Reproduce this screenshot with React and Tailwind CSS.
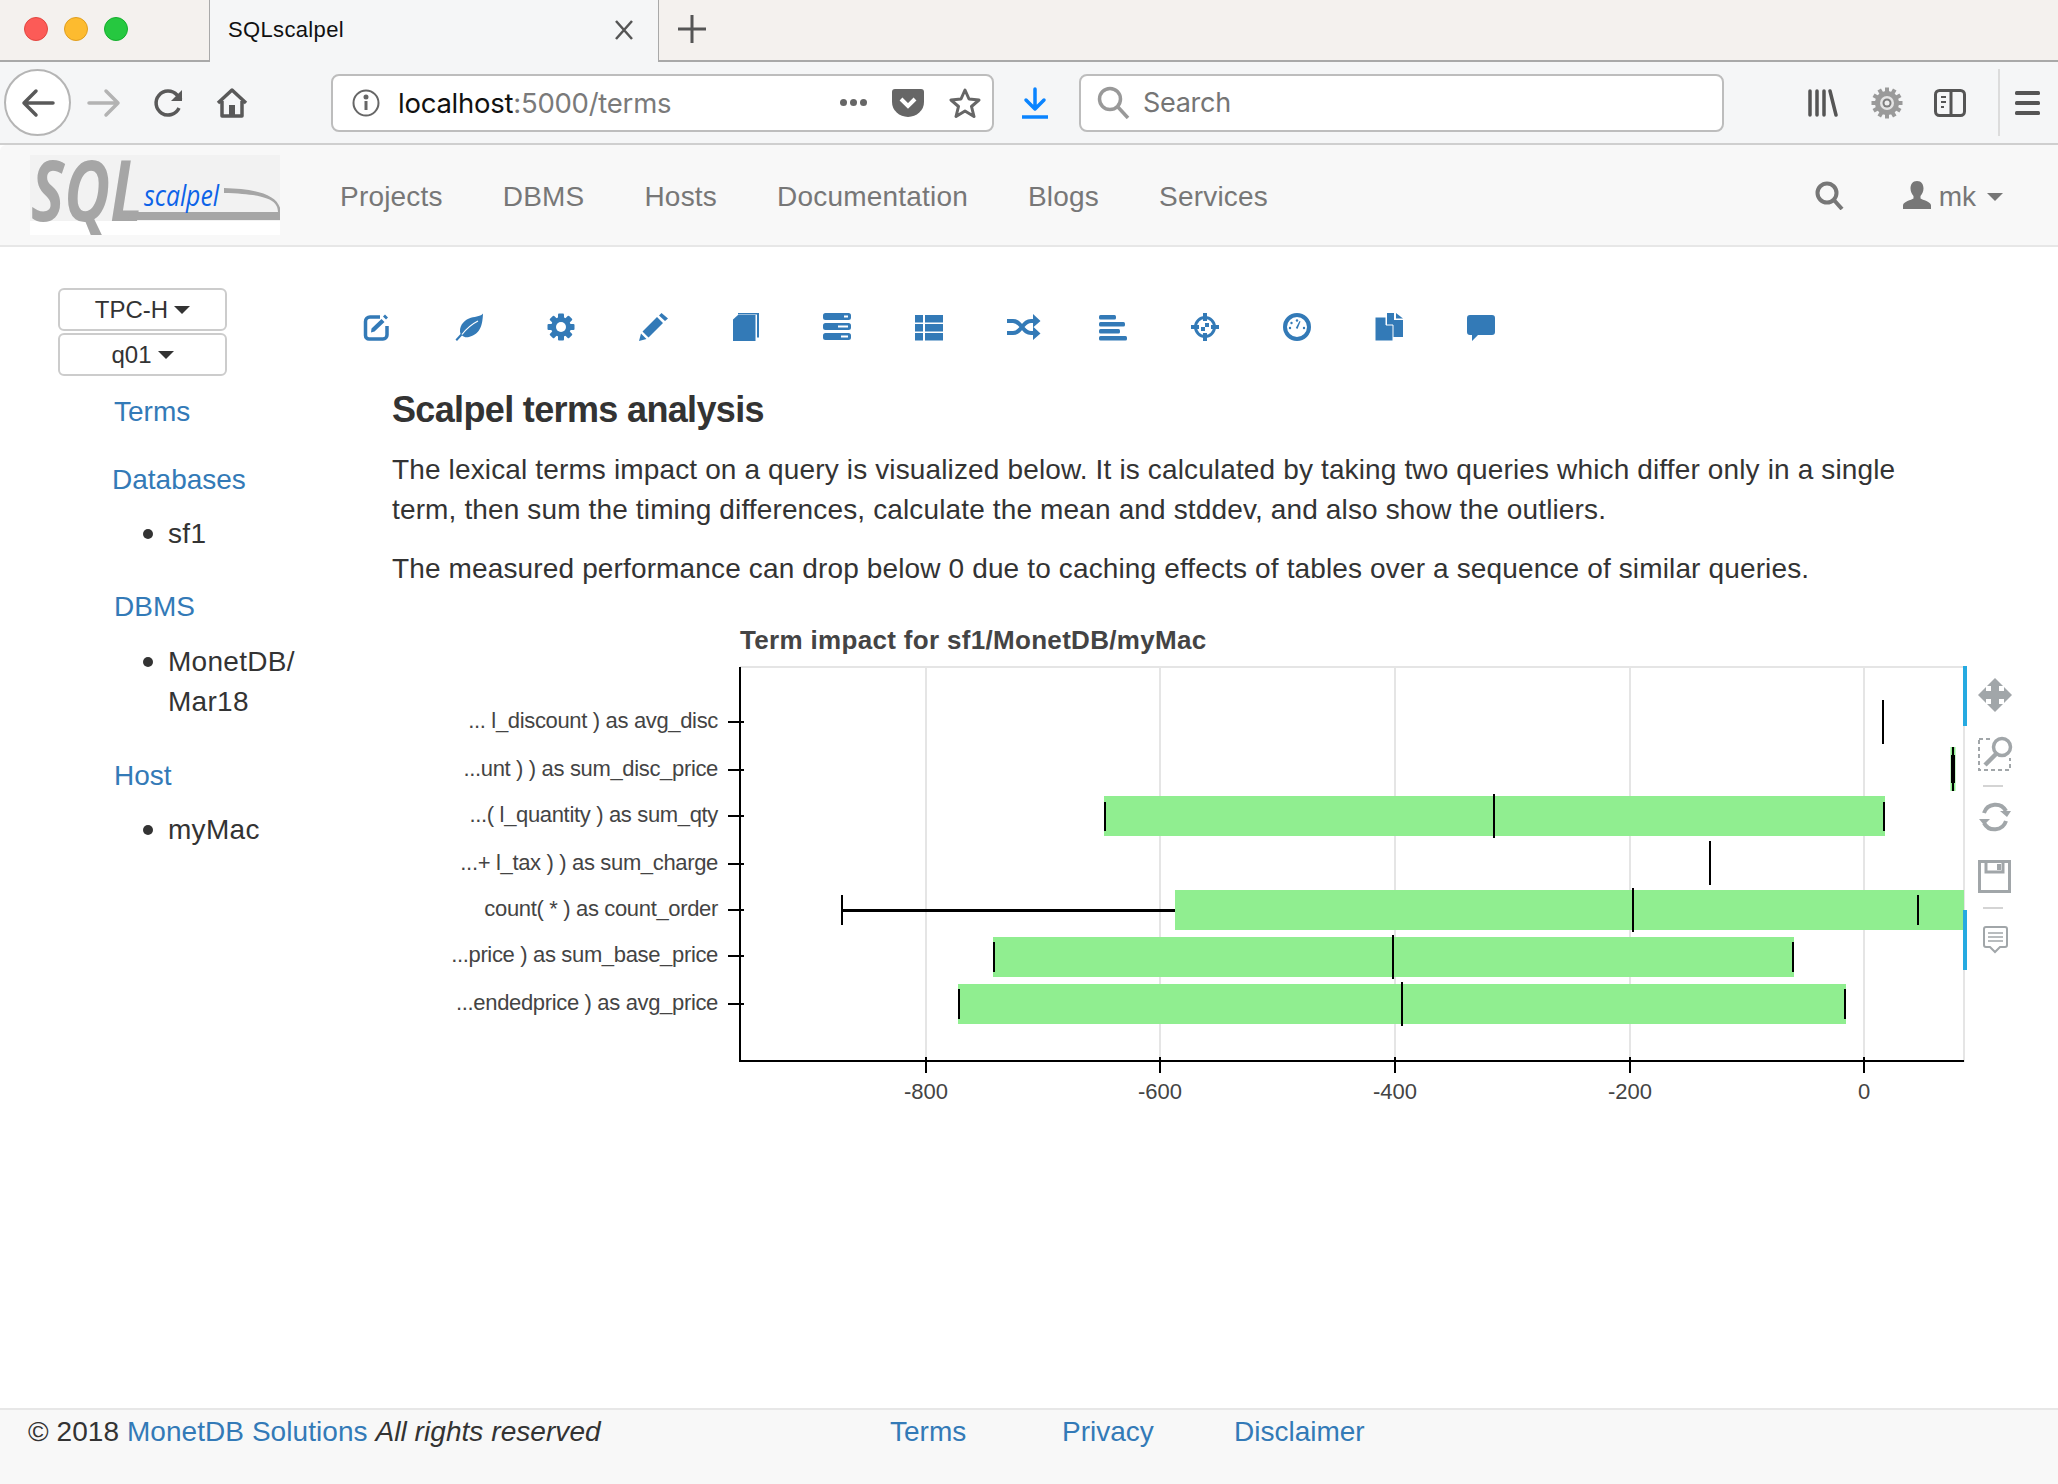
import { Fragment } from 'react';

const BLUE = '#337ab7';
const AXIS_TICKS = [
  { x: 926, label: '-800' },
  { x: 1160, label: '-600' },
  { x: 1395, label: '-400' },
  { x: 1630, label: '-200' },
  { x: 1864, label: '0' },
];

const ROWS = [
  { y: 723, label: '... l_discount ) as avg_disc' },
  { y: 771, label: '...unt ) ) as sum_disc_price' },
  { y: 817, label: '...( l_quantity ) as sum_qty' },
  { y: 865, label: '...+ l_tax ) ) as sum_charge' },
  { y: 911, label: 'count( * ) as count_order' },
  { y: 957, label: '...price ) as sum_base_price' },
  { y: 1005, label: '...endedprice ) as avg_price' },
];

// x0, x1, top, bottom of the boxes
const BOXES = [
  [1104, 1885, 797, 837],
  [1175, 1964, 891, 931],
  [993, 1794, 938, 978],
  [958, 1846, 985, 1025],
];

// x, y0, y1 of the black marks
const MARKS = [
  [1883, 701, 745],
  [1494, 795, 839],
  [1105, 803, 832],
  [1884, 803, 832],
  [1710, 842, 886],
  [1633, 889, 933],
  [1918, 896, 926],
  [842, 896, 926],
  [1393, 936, 980],
  [994, 943, 973],
  [1793, 943, 973],
  [1402, 983, 1027],
  [959, 990, 1020],
  [1845, 990, 1020],
];

function Caret({ color = '#333', className = '' }) {
  return <span className={`inline-block w-0 h-0 border-x-[8px] border-x-transparent border-t-[8px] ${className}`} style={{ borderTopColor: color }} />;
}

function Glyph({ w = 28, children }) {
  return (
    <svg width={w} height="28" viewBox={`0 0 ${w} 28`} fill={BLUE} className="block">
      {children}
    </svg>
  );
}

function Bullet({ children }) {
  return (
    <li className="flex ml-[143px] gap-[15px] tracking-[0.3px]">
      <span className="w-[10px] h-[10px] rounded-full bg-[#333] mt-[15px] shrink-0" />
      <span>{children}</span>
    </li>
  );
}

const TOOL_ICONS = [
  <Glyph key="edit">
    <path d="M17 4H7a4.500 4.500 0 0 0-4.500 4.500v14A3.500 3.500 0 0 0 6 26h14a4 4 0 0 0 4-4v-9" fill="none" stroke={BLUE} strokeWidth="3.500" />
    <path d="M8.500 15.500 18.500 6l3 3-10 9.500-3.500 1zM20 3.500l2-2 3 3-2 2z" />
  </Glyph>,
  <Glyph key="leaf">
    <path d="M28 0.500C27.500 11 26 21 14 24c-3 .6-5 .2-7-1.500L2 28l-1.500-1.500L5.500 21C3.500 14 8 8 14 5.500 19 3.500 25 4 28 .5z" />
    <path d="M7 21.500C12 15 17 11 23 8" fill="none" stroke="#fff" strokeWidth="1.200" />
  </Glyph>,
  <Glyph key="cog">
    <g transform="translate(14 14)">
      {[0, 45, 90, 135].map((a) => (
        <rect key={a} x="-3" y="-13.500" width="6" height="27" rx="1" transform={`rotate(${a})`} />
      ))}
      <circle r="10" />
      <circle r="5" fill="#fff" />
    </g>
  </Glyph>,
  <Glyph key="pencil" w={29}>
    <path d="M0 28l2-7.500 5.500 5.500zM3.500 18.500 18 4l6 6L9.500 24.500zM20 2.500 22.500 0 29 5.500 26 8z" />
  </Glyph>,
  <Glyph key="book">
    <g transform="translate(2 0)">
      <path d="M0 6.500 5 2h17.500v26H0z" />
      <path d="M5 0h21v24.500h-2V1.500H5z" />
    </g>
  </Glyph>,
  <Glyph key="tasks">
    <path fillRule="evenodd" d="M2.500 0h23A2.500 2.500 0 0 1 28 2.500v2A2.500 2.500 0 0 1 25.500 7h-23A2.500 2.500 0 0 1 0 4.500v-2A2.500 2.500 0 0 1 2.500 0zM21 2.500v2h4v-2zM2.500 10h23a2.500 2.500 0 0 1 2.500 2.500v2a2.500 2.500 0 0 1-2.500 2.500h-23A2.500 2.500 0 0 1 0 14.500v-2A2.500 2.500 0 0 1 2.500 10zM15 12.500v2h10v-2zM2.500 20h23a2.500 2.500 0 0 1 2.500 2.500v2a2.500 2.500 0 0 1-2.500 2.500h-23A2.500 2.500 0 0 1 0 24.500v-2A2.500 2.500 0 0 1 2.500 20zM18 22.500v2h7v-2z" />
  </Glyph>,
  <Glyph key="list">
    <path d="M0 2h8v7.500H0zM10 2h18v7.500H10zM0 11h8v7.500H0zM10 11h18v7.500H10zM0 20h8v7.500H0zM10 20h18v7.500H10z" />
  </Glyph>,
  <Glyph key="random" w={34}>
    <path d="M0 8h6c4.500 0 6 2.500 9 6s4.500 6 9 6h3M0 20h6c4.500 0 6-2.500 9-6s4.500-6 9-6h3" fill="none" stroke={BLUE} strokeWidth="4" />
    <path d="M26 1l7.500 7-7.500 6.500zM26 13.500l7.500 7L26 27z" />
  </Glyph>,
  <Glyph key="align">
    <rect x="0" y="2" width="17" height="4.500" rx="1.500" />
    <rect x="0" y="9" width="26" height="4.500" rx="1.500" />
    <rect x="0" y="16" width="21" height="4.500" rx="1.500" />
    <rect x="0" y="23" width="28" height="4.500" rx="1.500" />
  </Glyph>,
  <Glyph key="target">
    <circle cx="14" cy="14" r="9.500" fill="none" stroke={BLUE} strokeWidth="3" />
    <path d="M12 0h4v8h-4zM12 20h4v8h-4zM0 12h8v4H0zM20 12h8v4h-8z" />
    <path d="M14 10h4v4h-4zM10 14h4v4h-4z" />
  </Glyph>,
  <Glyph key="gauge">
    <circle cx="14" cy="14" r="12" fill="none" stroke={BLUE} strokeWidth="4" />
    <path d="M12.800 15 16.500 8l1 .5-3 7.500z" />
    <circle cx="14" cy="7.500" r="1.200" />
    <circle cx="8.500" cy="10" r="1.200" />
    <circle cx="7" cy="15" r="1.200" />
    <circle cx="21" cy="15" r="1.200" />
  </Glyph>,
  <Glyph key="copy">
    <path d="M12 0h7v7h9v17H12z" />
    <path d="M21 0l7 5.500h-7z" />
    <path d="M0 4h11v8h7v16H0z" stroke="#fff" strokeWidth="1" />
    <path d="M13 4.500l5 5.500h-5z" />
  </Glyph>,
  <Glyph key="comment">
    <path d="M3 2h22a3 3 0 0 1 3 3v14a3 3 0 0 1-3 3H11l-6 6v-6H3a3 3 0 0 1-3-3V5a3 3 0 0 1 3-3z" />
  </Glyph>,
];

function Logo() {
  return (
    <svg width="250" height="80" viewBox="0 0 250 80" className="block">
      <rect width="250" height="66" fill="#f2f2f2" />
      <rect width="250" height="14" y="66" fill="#fff" />
      <text x="1" y="66" fontFamily="'Open Sans', sans-serif" fontStyle="italic" fontWeight="700" fontSize="84" fill="#a6a6a6" textLength="112" lengthAdjust="spacingAndGlyphs">SQL</text>
      <path d="M100 57h148c0-12-12-18-54-19v-5c36 1 62 8 56 32H98z" fill="#a6a6a6" />
      <text x="114" y="51" fontFamily="'Open Sans', sans-serif" fontStyle="italic" fontSize="30" fill="#0d63e8" textLength="75" lengthAdjust="spacingAndGlyphs">scalpel</text>
    </svg>
  );
}

function Chart() {
  return (
    <svg width="1618" height="480" viewBox="440 620 1618 480" className="block ml-[77px] mt-[30px]" fontFamily="'Liberation Sans', Arial, sans-serif">
      <text x="740" y="650" fontSize="26" fontWeight="700" fill="#444" className="tracking-[0.32px]">Term impact for sf1/MonetDB/myMac</text>
      <rect x="740" y="667" width="1224" height="2" fill="#e5e5e5" />
      <rect x="1963" y="667" width="2" height="396" fill="#e5e5e5" />
      {AXIS_TICKS.map((t) => (
        <rect key={t.label} x={t.x - 1} y="668" width="2" height="394" fill="#e5e5e5" />
      ))}
      {BOXES.map(([x0, x1, y0, y1]) => (
        <rect key={x0} x={x0} y={y0} width={x1 - x0} height={y1 - y0} fill="#90ee90" />
      ))}
      <rect x="842" y="910" width="333" height="3" fill="#000" />
      <rect x="1950.500" y="748" width="5" height="44" fill="#90ee90" />
      <rect x="1952" y="748" width="2" height="44" fill="#000" />
      <rect x="1951" y="756" width="4" height="28" fill="#000" />
      {MARKS.map(([x, y0, y1]) => (
        <rect key={`${x}-${y0}`} x={x - 1} y={y0} width="2" height={y1 - y0} fill="#000" />
      ))}
      <rect x="739" y="668" width="2" height="395" fill="#000" />
      <rect x="739" y="1061" width="1225" height="2" fill="#000" />
      {ROWS.map((r) => (
        <Fragment key={r.y}>
          <rect x="728" y={r.y - 1} width="16" height="2" fill="#000" />
          <text x="718" y={r.y + 6} textAnchor="end" fontSize="22" fill="#444" className="tracking-[-0.34px]">{r.label}</text>
        </Fragment>
      ))}
      {AXIS_TICKS.map((t) => (
        <Fragment key={t.label}>
          <rect x={t.x - 1} y="1058" width="2" height="16" fill="#000" />
          <text x={t.x} y="1100" textAnchor="middle" fontSize="22" fill="#444">{t.label}</text>
        </Fragment>
      ))}
      {/* plot toolbar */}
      <rect x="1963" y="667" width="4" height="60" fill="#26aae1" />
      <rect x="1963" y="911" width="4" height="60" fill="#26aae1" />
      <path d="M1995 679L2003 687H1999V692H2004V688L2012 696L2004 704V700H1999V705H2003L1995 713L1987 705H1991V700H1986V704L1978 696L1986 688V692H1991V687H1987Z" fill="#a1a6a9" />
      <rect x="1979" y="740" width="31" height="31" fill="none" stroke="#a1a6a9" strokeWidth="2" strokeDasharray="4 3" />
      <rect x="1990" y="735" width="24" height="24" fill="#fff" />
      <circle cx="2002" cy="748" r="8.500" fill="none" stroke="#a1a6a9" strokeWidth="3.500" />
      <path d="M1996 755l-11 11" stroke="#a1a6a9" strokeWidth="4.500" />
      <rect x="1983" y="786" width="20" height="2" fill="#d4d4d4" />
      <path d="M1984 814a12 12 0 0 1 22-2M2006 822a12 12 0 0 1-22 2" fill="none" stroke="#a1a6a9" strokeWidth="4" />
      <path d="M2000 812h11l-4 6zM1979 820h11l-6 6z" fill="#a1a6a9" />
      <path d="M1979.500 862.500h30v30h-30zM1986 862v11h17v-11" fill="none" stroke="#a1a6a9" strokeWidth="3" />
      <rect x="1997" y="865" width="4" height="6" fill="#a1a6a9" />
      <rect x="1983" y="908" width="20" height="2" fill="#d4d4d4" />
      <path d="M1986 928h19a2 2 0 0 1 2 2v16a2 2 0 0 1-2 2h-5l-5 5-5-5h-4a2 2 0 0 1-2-2v-16a2 2 0 0 1 2-2z" fill="none" stroke="#a1a6a9" strokeWidth="2" />
      <path d="M1988 934h15M1988 938h15M1988 942h15" stroke="#a1a6a9" strokeWidth="1.500" />
    </svg>
  );
}

function BrowserChrome() {
  return (
    <>
      <div className="h-[62px] flex bg-[#f4f1ee] border-b-2 border-[#a9a9a9] relative shrink-0">
        <div className="w-[209px] flex items-center gap-[16px] pl-[24px] pb-[3px]">
          <span className="w-[24px] h-[24px] rounded-full bg-[#fc5b57] border border-[#e2463f]" />
          <span className="w-[24px] h-[24px] rounded-full bg-[#fdbb2f] border border-[#e09e1e]" />
          <span className="w-[24px] h-[24px] rounded-full bg-[#26c840] border border-[#14ae2c]" />
        </div>
        <div className="w-[450px] h-[62px] bg-[#f5f6f7] border-x border-[#a9a9a9] flex items-center justify-between pl-[18px] pr-[24px] pb-[3px]">
          <span className="text-[22px] text-[#111] tracking-[0.35px]">SQLscalpel</span>
          <svg width="20" height="20" viewBox="0 0 20 20" stroke="#555" strokeWidth="2.500" fill="none">
            <path d="M2 1l16 18M18 1 2 19" />
          </svg>
        </div>
        <svg width="30" height="30" viewBox="0 0 30 30" className="ml-[18px] mt-[14px]" stroke="#555" strokeWidth="3">
          <path d="M15 1v28M1 15h28" />
        </svg>
      </div>

      <div className="h-[83px] flex items-center bg-[#f5f6f7] border-b-2 border-[#cfcfcf] relative shrink-0">
        <div className="w-[67px] h-[67px] ml-[4px] rounded-full bg-white border-2 border-[#b5b5b5] flex items-center justify-center shrink-0">
          <svg width="34" height="30" viewBox="0 0 34 30" fill="none" stroke="#595959" strokeWidth="3.500" strokeLinecap="round" strokeLinejoin="round">
            <path d="M32 15H3M15 3 3 15l12 12" />
          </svg>
        </div>
        <svg width="34" height="30" viewBox="0 0 34 30" fill="none" stroke="#b3b3b3" strokeWidth="3.500" strokeLinecap="round" strokeLinejoin="round" className="ml-[16px] shrink-0">
          <path d="M2 15h29M19 3l12 12-12 12" />
        </svg>
        <svg width="32" height="32" viewBox="0 0 32 32" fill="none" stroke="#595959" strokeWidth="3.500" className="ml-[31px] shrink-0">
          <path d="M27 21a12 12 0 1 1-2-13l4 5" />
          <path d="M30 3v11H19" fill="#595959" stroke="none" />
        </svg>
        <svg width="32" height="32" viewBox="0 0 32 32" fill="none" stroke="#595959" strokeWidth="3.500" strokeLinejoin="round" className="ml-[32px] shrink-0">
          <path d="M2 16 16 3l14 13M6 14v15h20V14" />
          <rect x="13" y="18" width="6" height="11" fill="#595959" stroke="none" />
        </svg>

        <div className="w-[663px] h-[58px] ml-[83px] rounded-[8px] bg-white border-2 border-[#bdbdbd] flex items-center pl-[19px] pr-[11px] shrink-0">
          <svg width="28" height="28" viewBox="0 0 28 28" fill="none" stroke="#666" strokeWidth="2">
            <circle cx="14" cy="14" r="12.500" />
            <path d="M14 12v9" strokeWidth="3" />
            <circle cx="14" cy="8" r="1.500" fill="#666" />
          </svg>
          <span className="ml-[18px] text-[27.500px] font-['Inter',sans-serif] tracking-[-0.25px] text-[#111]">localhost<span className="text-[#7a7a7a]">:5000/terms</span></span>
          <span className="ml-auto text-[#666] flex gap-[3px]">
            <span className="w-[7px] h-[7px] rounded-full bg-[#666]" />
            <span className="w-[7px] h-[7px] rounded-full bg-[#666]" />
            <span className="w-[7px] h-[7px] rounded-full bg-[#666]" />
          </span>
          <svg width="32" height="30" viewBox="0 0 32 30" className="ml-[25px]">
            <path d="M3 1h26a3 3 0 0 1 3 3v10a16 15 0 0 1-32 0V4a3 3 0 0 1 3-3z" fill="#666" />
            <path d="M9 11l7 7 7-7" fill="none" stroke="#fff" strokeWidth="4" />
          </svg>
          <svg width="32" height="32" viewBox="0 0 32 32" fill="none" stroke="#666" strokeWidth="3" strokeLinejoin="round" className="ml-[25px]">
            <path d="M16 3l4 9 10 1-7.500 6.500 2.500 10-9-5.500-9 5.500 2.500-10L2 13l10-1z" />
          </svg>
        </div>

        <svg width="28" height="32" viewBox="0 0 28 32" fill="none" stroke="#0a84ff" strokeWidth="3.500" strokeLinecap="round" strokeLinejoin="round" className="ml-[27px] shrink-0">
          <path d="M14 2v20M5 13l9 9 9-9" />
          <path d="M1 30h26" strokeLinecap="butt" />
        </svg>

        <div className="w-[645px] h-[58px] ml-[30px] rounded-[8px] bg-white border-2 border-[#bdbdbd] flex items-center pl-[16px] shrink-0">
          <svg width="33" height="33" viewBox="0 0 33 33" fill="none" stroke="#999" strokeWidth="3.500">
            <circle cx="13" cy="13" r="10.500" />
            <path d="M20 20l11 12" />
          </svg>
          <span className="ml-[13px] text-[27px] font-['Inter',sans-serif] tracking-[-0.3px] text-[#757575]">Search</span>
        </div>

        <svg width="30" height="28" viewBox="0 0 30 28" stroke="#555" strokeWidth="3.500" strokeLinecap="round" className="ml-[84px] shrink-0">
          <path d="M2 2v24M9 2v24M16 2v24M22 2l6 24" />
        </svg>
        <svg width="32" height="32" viewBox="0 0 32 32" className="ml-[33px] shrink-0">
          <g transform="translate(16 16)" fill="#9a9a9a">
            {[0, 30, 60, 90, 120, 150].map((a) => (
              <rect key={a} x="-2" y="-15.500" width="4" height="31" transform={`rotate(${a})`} />
            ))}
            <circle r="12" />
            <circle r="7" fill="#e4e4e4" />
            <circle r="4.500" fill="#7e7e7e" />
            <circle r="2.500" fill="#eee" />
          </g>
        </svg>
        <svg width="32" height="28" viewBox="0 0 32 28" className="ml-[31px] shrink-0">
          <rect x="1.500" y="1.500" width="29" height="25" rx="4" fill="none" stroke="#555" strokeWidth="3" />
          <path d="M17 2v24" stroke="#555" strokeWidth="3" />
          <path d="M7 8h5M7 13h5M7 18h3" stroke="#555" strokeWidth="2" />
        </svg>
        <div className="w-[2px] h-[67px] bg-[#dcdcdc] ml-[32px] shrink-0" />
        <svg width="25" height="24" viewBox="0 0 25 24" fill="#555" className="ml-[15px] shrink-0">
          <rect width="25" height="4" y="0" rx="1.500" />
          <rect width="25" height="4" y="10" rx="1.500" />
          <rect width="25" height="4" y="20" rx="1.500" />
        </svg>
      </div>
    </>
  );
}

export default function App() {
  return (
    <div className="h-[1484px] w-[2058px] flex flex-col bg-white overflow-hidden font-['Liberation_Sans',Arial,sans-serif] text-[28px] leading-[40px] text-[#333]">
      <BrowserChrome />

      <nav className="h-[102px] flex items-center bg-[#f8f8f8] border-b-2 border-[#e7e7e7] rounded-tl-[6px] shrink-0">
        <div className="ml-[30px] mr-[30px]">
          <Logo />
        </div>
        {['Projects', 'DBMS', 'Hosts', 'Documentation', 'Blogs', 'Services'].map((item) => (
          <a key={item} className="px-[30px] pt-[4px] text-[#777] tracking-[0.2px]">{item}</a>
        ))}
        <svg width="29" height="29" viewBox="0 0 29 29" fill="none" stroke="#777" strokeWidth="4" className="ml-auto">
          <circle cx="12" cy="12" r="9.500" />
          <path d="M18 18l9 10" />
        </svg>
        <svg width="28" height="28" viewBox="0 0 28 28" fill="#777" className="ml-[59px]">
          <path d="M14 0c4.500 0 6.500 3.500 6.500 7.500 0 3-1.500 6-3 7.500v2.500c2 1.500 10.500 3 10.500 7V28H0v-3.500c0-4 8.500-5.500 10.500-7V15c-1.500-1.500-3-4.500-3-7.500C7.500 3.500 9.500 0 14 0z" />
        </svg>
        <span className="ml-[8px] pt-[4px] text-[#777]">mk</span>
        <Caret color="#777" className="ml-[11px] mr-[55px] mt-[4px]" />
      </nav>

      <main className="flex-1 flex min-h-0">
        <aside className="w-[363px] shrink-0 pt-[41px]">
          <div className="ml-[58px] w-[169px] flex flex-col gap-[2px] text-[24px]">
            <button className="h-[43px] rounded-[6px] border-2 border-[#ccc] bg-white flex items-center justify-center gap-[6px]">TPC-H <Caret /></button>
            <button className="h-[43px] rounded-[6px] border-2 border-[#ccc] bg-white flex items-center justify-center gap-[6px]">q01 <Caret /></button>
          </div>
          <div className="pl-[114px] mt-[16px] text-[#337ab7]">Terms</div>
          <div className="pl-[112px] mt-[28px] text-[#337ab7]">Databases</div>
          <ul className="mt-[14px]"><Bullet>sf1</Bullet></ul>
          <div className="pl-[114px] mt-[33px] text-[#337ab7]">DBMS</div>
          <ul className="mt-[15px]"><Bullet>MonetDB/<br />Mar18</Bullet></ul>
          <div className="pl-[114px] mt-[34px] text-[#337ab7]">Host</div>
          <ul className="mt-[14px]"><Bullet>myMac</Bullet></ul>
        </aside>

        <section className="flex-1 min-w-0 pt-[66px]">
          <div className="flex">
            {TOOL_ICONS.map((icon) => (
              <div key={icon.key} className="w-[92px] shrink-0">{icon}</div>
            ))}
          </div>
          <div className="pl-[29px]">
            <h3 className="mt-[47px] text-[36px] leading-[44px] font-bold tracking-[-0.65px]">Scalpel terms analysis</h3>
            <p className="mt-[18px] tracking-[0.14px]">The lexical terms impact on a query is visualized below. It is calculated by taking two queries which differ only in a single<br />term, then sum the timing differences, calculate the mean and stddev, and also show the outliers.</p>
            <p className="mt-[19px] tracking-[0.14px]">The measured performance can drop below 0 due to caching effects of tables over a sequence of similar queries.</p>
          </div>
          <Chart />
        </section>
      </main>

      <footer className="h-[76px] shrink-0 bg-[#f8f8f8] border-t-2 border-[#e7e7e7] pt-[2px] flex">
        <div className="w-[890px] pl-[28px] tracking-[0.06px]">
          © 2018 <a className="text-[#337ab7]">MonetDB Solutions</a> <em>All rights reserved</em>
        </div>
        <a className="w-[172px] text-[#337ab7]">Terms</a>
        <a className="w-[172px] text-[#337ab7]">Privacy</a>
        <a className="text-[#337ab7]">Disclaimer</a>
      </footer>
    </div>
  );
}
